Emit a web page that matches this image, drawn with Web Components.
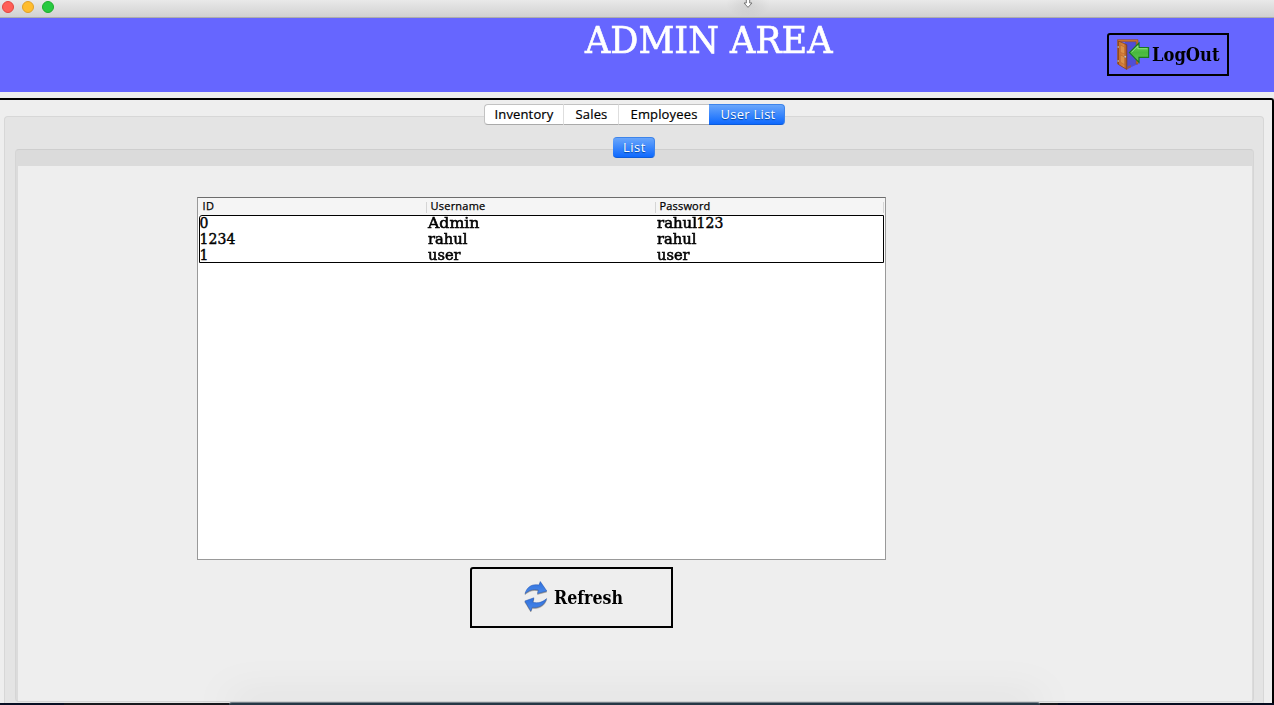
<!DOCTYPE html>
<html lang="en"><head><meta charset="utf-8"><title>Admin Area</title>
<style>html,body{margin:0;height:100%;overflow:hidden;background:#eee}</style></head>
<body><admin-window></admin-window>
<script>
const define = (name, html, ready) => customElements.define(name, class extends HTMLElement {
  connectedCallback() {
    if (this.shadowRoot) return;
    const root = this.attachShadow({mode: 'open'});
    const t = document.createElement('template');
    t.innerHTML = html;
    root.append(t.content.cloneNode(true));
    if (ready) ready(this, root);
  }
});

/* Label whose text spans the width in "w": by tracking, or by glyph width with "stretch". */
define('fit-label', `<style>:host{display:inline-block;white-space:pre}span{display:inline-block;transform-origin:0 50%}</style><span><slot></slot></span>`, (el, root) => {
  const s = root.querySelector('span'), n = el.textContent.length, w = +el.getAttribute('w');
  if (w) {
    const now = s.getBoundingClientRect().width;
    if (el.hasAttribute('stretch')) s.style.transform = `scaleX(${w / now})`;
    else s.style.letterSpacing = ((w - now) / n) + 'px';
    el.style.width = w + 'px';
  }
});

define('title-bar', `<style>
:host{display:flex;box-sizing:border-box;height:18px;flex:none;background:radial-gradient(ellipse 22px 14px at 748px 4px,#0001,#0000),linear-gradient(#e9e9e9,#d1d1d1);border-bottom:1px solid #adadad;padding:1px 0 0 2px;gap:8px;position:relative}
i{box-sizing:border-box;width:12px;height:12px;border-radius:50%;border:1px solid}
.r{background:#ff5f57;border-color:#e2463f}.y{background:#ffbd2e;border-color:#e0a028}.g{background:#28ca41;border-color:#1dad2b}
svg{position:absolute;left:742px;top:0}
</style><i class="r"></i><i class="y"></i><i class="g"></i>
<svg width="12" height="9" viewBox="0 0 12 9"><path d="M4.3-1v4H2L6 7.4 10 3H7.7v-4z" fill="#fff" stroke="#777" stroke-width="1"/></svg>`);

define('door-icon', `<style>:host{display:block;width:33px;height:32px}svg{display:block}</style>
<svg width="33" height="32" viewBox="0 0 33 32">
<defs><linearGradient id="w" x2="1"><stop stop-color="#c8702b"/><stop offset=".6" stop-color="#d88340"/><stop offset="1" stop-color="#a65219"/></linearGradient>
<linearGradient id="a" x2="0" y2="1"><stop stop-color="#71d45d"/><stop offset=".5" stop-color="#48b83e"/><stop offset="1" stop-color="#62c753"/></linearGradient></defs>
<path d="M10 30l11-5V3H8z" fill="#4745c4" opacity=".7"/>
<path d="M.5 25V.7h20.5V25H19.2V2.6H2.2V25z" fill="#cf752f" stroke="#944a18" stroke-width=".6"/>
<path d="M1.5 2L9.8 5.8V30.5L1.5 25.5z" fill="url(#w)" stroke="#7e3e13" stroke-width=".7"/>
<path d="M3.3 6l4.3 2v7L3.3 13.3zM3.3 16l4.3 1.8v8L3.3 23z" fill="#dc9148" stroke="#b06228" stroke-width=".5"/>
<path d="M9.8 30.5l4-2V26l-3.2 1.5z" fill="#a65a32" opacity=".8"/>
<circle cx="8.2" cy="17.8" r="1" fill="#ddd" stroke="#555" stroke-width=".3"/>
<path d="M1.2 7v2M1.2 21v2" stroke="#aaa" stroke-width="1.2"/>
<path d="M12.4 13.6L22 4v4.6h9.6v9.8H22v4.9z" fill="url(#a)" stroke="#18791f" stroke-width="1.2"/>
<path d="M14.4 13.4l6.5-6.5v2.8h9.6" fill="none" stroke="#a3e995" stroke-width=".8"/></svg>`);

define('refresh-icon', `<style>:host{display:block;width:26px;height:32px;margin-top:-2px}svg{display:block;filter:drop-shadow(.5px 1px .7px #0006)}</style>
<svg width="26" height="32" viewBox="0 0 26 32"><defs><linearGradient id="b" x2="0" y2="1"><stop stop-color="#2f70dc"/><stop offset="1" stop-color="#4a89ea"/></linearGradient></defs>
<g fill="url(#b)" stroke="#2457b2" stroke-width=".5" stroke-linejoin="round"><path d="M2 12.6C4 5.8 9 2.6 16 4L17.3.5 23.8 10 14.5 12.4 15.4 9C10.5 7.6 6 9.2 2 12.6z"/>
<path d="M23.6 17.6C21.5 24.4 16 27.2 9.3 26.2L7.8 30 1.8 20 10.9 16.8 9.8 21.3C15 22.6 19.8 21.2 23.6 17.6z"/></g></svg>`);

define('outline-button', `<style>:host{display:flex;box-sizing:border-box;align-items:center;border:2px solid #000;border-top-left-radius:3px;color:#000;font:bold 18px/22px "DejaVu Serif Condensed","DejaVu Serif",serif;font-stretch:condensed}</style><slot name="icon"></slot><slot></slot>`);

define('page-header', `<style>
:host{display:grid;grid-template-columns:585px 1fr auto;height:74px;flex:none;background:#66f;color:#fff}
.t{font:37px/46px "DejaVu Serif Condensed","DejaVu Serif",serif;font-stretch:condensed;-webkit-text-stroke:.6px #fff}
outline-button{width:122px;height:43px;margin:15px 45px 0 0;padding-left:8px;gap:2px}
</style><span></span><div class="t"><fit-label stretch w="247.5">ADMIN AREA</fit-label></div>
<outline-button><door-icon slot="icon"></door-icon><fit-label stretch w="67.5">LogOut</fit-label></outline-button>`);

define('tab-item', `<style>
:host{display:flex;box-sizing:border-box;justify-content:center;height:21px;font:500 13px/18px "Open Sans",sans-serif;-webkit-text-stroke:.2px currentColor;color:#000;background:#fff;border:solid #c2c2c2;border-width:1px 1px 1px 0;border-right-color:#dedede;border-bottom-color:#aaa}
:host([first]){border-left-width:1px;border-radius:4px 0 0 4px}
:host([active]){color:#fff;-webkit-text-stroke:0;border:1px solid #3d84ea;border-bottom-color:#0d5bd8;border-left:0;border-radius:0 4px 4px 0;background:linear-gradient(#69a6fb,#0e69fe);text-shadow:0 1px 1px #0045a0}
:host([active][solo]){border-radius:4px}
:host([last]){border-right:0}
</style><slot></slot>`);

define('user-table', `<style>
:host{display:flex;flex-direction:column;box-sizing:border-box;width:689px;height:363px;background:#fff;border:1px solid #999;border-top-color:#6c6c6c;color:#000}
.r{display:grid;grid-template-columns:228px 229px 1fr}
.h{display:grid;height:17px;background:#f5f5f5;font:500 11px/16px "Open Sans",sans-serif;-webkit-text-stroke:.25px #000;grid-template-columns:229px 229px 1fr;padding-right:1px}
.h>div{padding-left:4.5px;background:linear-gradient(#d5d5d5,#d5d5d5) right 4px/1px 11px no-repeat}
.h>div+div{padding-left:3.5px}
.b{box-sizing:border-box;height:48px;margin:0 1px;border:1px solid #000;border-top-left-radius:3px;font:14px/16px "DejaVu Serif",serif;-webkit-text-stroke:.55px #000}
.r{height:16px;position:relative;top:-1px}
.n{-webkit-text-stroke:.4px #000}
.b fit-label{position:relative;left:-.5px}
</style>
<div class="h"><div><fit-label w="12">ID</fit-label></div><div><fit-label w="55">Username</fit-label></div><div><fit-label w="51">Password</fit-label></div></div>
<div class="b">
<div class="r"><fit-label class="n" w="9">0</fit-label><fit-label stretch w="51.5">Admin</fit-label><div><fit-label stretch w="40">rahul</fit-label><fit-label class="n" w="27">123</fit-label></div></div>
<div class="r"><fit-label class="n" w="36">1234</fit-label><fit-label stretch w="39.5">rahul</fit-label><fit-label stretch w="39.5">rahul</fit-label></div>
<div class="r"><fit-label class="n" w="9">1</fit-label><fit-label stretch w="32.5">user</fit-label><fit-label stretch w="32.5">user</fit-label></div>
</div>`);

define('admin-window', `<style>
:host{display:flex;flex-direction:column;height:705px;width:1274px;overflow:hidden;background:#eee;position:relative}
.frame{box-sizing:border-box;margin-top:6px;height:605px;border:solid #000;border-width:2px 2px 0 0;border-top-right-radius:3px;padding:4px 8px 0 4px;display:flex;flex-direction:column;background:#eee}
.tabs{display:flex;position:relative;z-index:1;flex:none}
.tabs.a{margin-left:480px}.tabs.b{margin-left:598px}
.outer{flex:1;margin-top:-9px;padding:20px 9px 1px 10px;box-sizing:border-box;background:#e4e4e4;border:1px solid #d7d7d7;border-bottom:0;border-radius:4px 4px 0 0;display:flex;flex-direction:column}
.inner{flex:1;margin-top:-9px;box-sizing:border-box;background:#dbdbdb;border:1px solid #cecece;border-color:#cecece #d5d5d5 #d5d5d5;border-radius:4px;padding:16px 1px 0 2px;display:flex}
.page{flex:1;background:#eee;padding:31px 0 0 179px}
outline-button{width:203px;height:61px;margin:7px 0 0 273px;padding-left:51px;gap:5px}
.edge{height:2px;background:linear-gradient(90deg,#080f24 64px,#17181d 64px 1058px,#060c20 1058px)}
.dock{position:absolute;left:229px;width:811px;bottom:0;height:3px;box-sizing:border-box;background:#263745;border-top:1px solid #77818a;border-radius:4px 4px 0 0;box-shadow:0 0 40px 1px #0004}
</style>
<title-bar></title-bar><page-header></page-header>
<div class="frame">
<div class="tabs a"><tab-item first style="width:80px"><fit-label w="59">Inventory</fit-label></tab-item><tab-item style="width:55px;padding-left:1px"><fit-label w="32">Sales</fit-label></tab-item><tab-item last style="width:90px"><fit-label w="67">Employees</fit-label></tab-item><tab-item active style="width:76px;padding-left:3px"><fit-label w="55">User List</fit-label></tab-item></div>
<div class="outer"><div class="tabs b"><tab-item active solo style="width:42px;padding-left:2px"><fit-label w="23">List</fit-label></tab-item></div>
<div class="inner"><div class="page"><user-table></user-table><outline-button><refresh-icon slot="icon"></refresh-icon><fit-label stretch w="69">Refresh</fit-label></outline-button></div></div></div>
</div><div class="edge"></div><div class="dock"></div>`);
</script></body></html>
